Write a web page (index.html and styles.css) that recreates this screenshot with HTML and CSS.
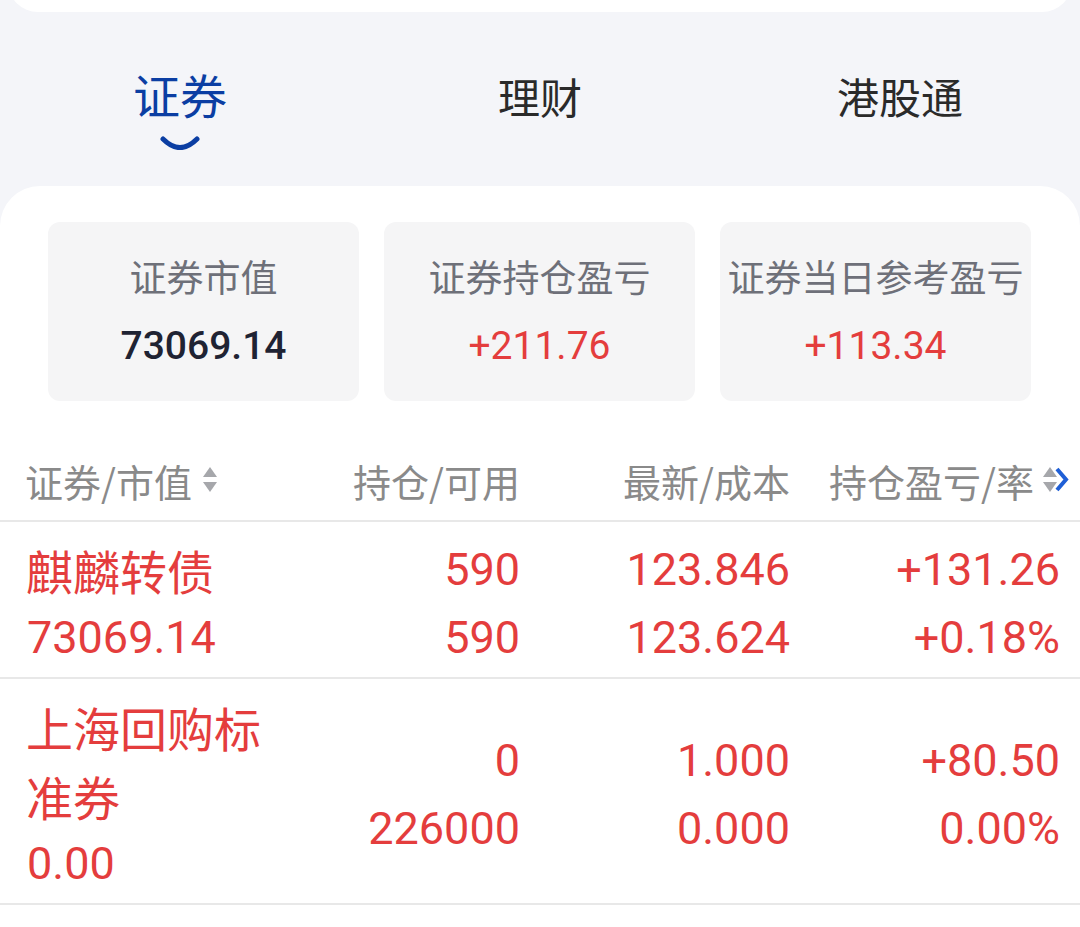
FILE: index.html
```html
<!DOCTYPE html>
<html lang="zh-CN">
<head>
<meta charset="utf-8">
<link rel="stylesheet" href="styles.css">
</head>
<body>
<div class="page">
  <div class="top-card"></div>
  <nav class="tabs">
    <div class="tab active">证券
      <svg class="smile" width="40" height="14" viewBox="0 0 40 14"><path d="M3 3 Q20 20 37 3" fill="none" stroke="#0b3ea3" stroke-width="5" stroke-linecap="round"/></svg>
    </div>
    <div class="tab">理财</div>
    <div class="tab">港股通</div>
  </nav>
  <section class="card">
    <div class="stats">
      <div class="stat"><div class="stat-label">证券市值</div><div class="stat-value dark">73069.14</div></div>
      <div class="stat"><div class="stat-label">证券持仓盈亏</div><div class="stat-value red">+211.76</div></div>
      <div class="stat"><div class="stat-label">证券当日参考盈亏</div><div class="stat-value red">+113.34</div></div>
    </div>
    <div class="thead">
      <div class="th left">证券/市值
        <svg class="sort" width="16" height="28" viewBox="0 0 16 28"><path d="M8 1 L15 11 L1 11 Z" fill="#a6a7ab"/><path d="M1 16 L15 16 L8 26 Z" fill="#a6a7ab"/></svg>
      </div>
      <div class="th">持仓/可用</div>
      <div class="th">最新/成本</div>
      <div class="th last">持仓盈亏/率
        <svg class="sort2" width="28" height="28" viewBox="0 0 28 28"><path d="M8 1 L15 11 L1 11 Z" fill="#a6a7ab"/><path d="M1 16 L15 16 L8 26 Z" fill="#a6a7ab"/><path d="M15 3 L24 13.5 L15 24" fill="none" stroke="#1f5fd6" stroke-width="4" stroke-linejoin="miter"/></svg>
      </div>
    </div>
    <div class="row">
      <div class="cell name"><div class="cjk">麒麟转债</div><div>73069.14</div></div>
      <div class="cell num"><div>590</div><div>590</div></div>
      <div class="cell num"><div>123.846</div><div>123.624</div></div>
      <div class="cell num"><div>+131.26</div><div>+0.18%</div></div>
    </div>
    <div class="row">
      <div class="cell name"><div class="cjk">上海回购标准券</div><div>0.00</div></div>
      <div class="cell num"><div>0</div><div>226000</div></div>
      <div class="cell num"><div>1.000</div><div>0.000</div></div>
      <div class="cell num"><div>+80.50</div><div>0.00%</div></div>
    </div>
  </section>
</div>
</body>
</html>
```
FILE: styles.css
```css
* { box-sizing: border-box; }
html, body { margin: 0; padding: 0; }
body {
  background: #f4f5f9;
  font-family: Roboto, "Noto Sans CJK SC", sans-serif;
  width: 1080px;
  height: 927px;
  overflow: hidden;
}
.page { display: flex; flex-direction: column; }
.top-card {
  margin: -30px 8px 0;
  height: 42px;
  background: #fff;
  border-radius: 0 0 30px 30px;
}
.tabs {
  display: grid;
  grid-template-columns: repeat(3, 1fr);
  height: 174px;
  padding-top: 54px;
}
.tab {
  display: flex;
  flex-direction: column;
  align-items: center;
  font-family: "Noto Sans CJK SC", sans-serif;
  font-size: 42px;
  line-height: 56px;
  color: #2a2a2a;
  padding-top: 2px;
}
.tab.active {
  color: #0b3ea3;
  font-size: 47px;
  line-height: 56px;
  padding-top: 0;
}
.smile { margin-top: 14px; }
.card {
  background: #fff;
  border-radius: 40px 40px 0 0;
  padding-top: 36px;
  flex: 1;
  min-height: 741px;
}
.stats {
  display: grid;
  grid-template-columns: repeat(3, 311px);
  gap: 25px;
  padding: 0 48px;
}
.stat {
  background: #f5f5f6;
  border-radius: 12px;
  height: 179px;
  display: flex;
  flex-direction: column;
  align-items: center;
  padding-top: 30px;
}
.stat-label {
  font-family: "Noto Sans CJK SC", sans-serif;
  font-size: 37px;
  line-height: 48px;
  color: #6e7079;
}
.stat-value {
  font-family: Roboto, sans-serif;
  font-size: 39px;
  line-height: 48px;
  margin-top: 22px;
  font-weight: 500;
}
.dark { color: #1f2333; }
.red { color: #e43d3d; font-weight: 400; }
.thead, .row {
  display: grid;
  grid-template-columns: 250px 243px 270px 270px;
  padding: 0 20px 0 27px;
}
.thead {
  margin-top: 43px;
  height: 78px;
  align-items: center;
  border-bottom: 2px solid #e8e8e8;
  padding-bottom: 4px;
}
.th {
  font-family: "Noto Sans CJK SC", sans-serif;
  font-size: 38px;
  color: #8a8a8a;
  text-align: right;
  display: flex;
  justify-content: flex-end;
  align-items: center;
  white-space: nowrap;
}
.th.left { justify-content: flex-start; margin-left: -2px; }
.sort { margin-left: 10px; }
.th.last { margin-right: -10px; }
.sort2 { margin-left: 8px; }
.row {
  padding-top: 13px;
  padding-bottom: 5px;
  border-bottom: 2px solid #e8e8e8;
  color: #e43d3d;
  font-size: 45px;
  line-height: 68px;
}
.cell { display: flex; flex-direction: column; }
.cell.num {
  align-items: flex-end;
  justify-content: center;
  text-align: right;
}
.name .cjk {
  font-family: "Noto Sans CJK SC", sans-serif;
  font-size: 47px;
  width: 245px;
  line-height: 69px;
  margin-left: -1px;
}
```
